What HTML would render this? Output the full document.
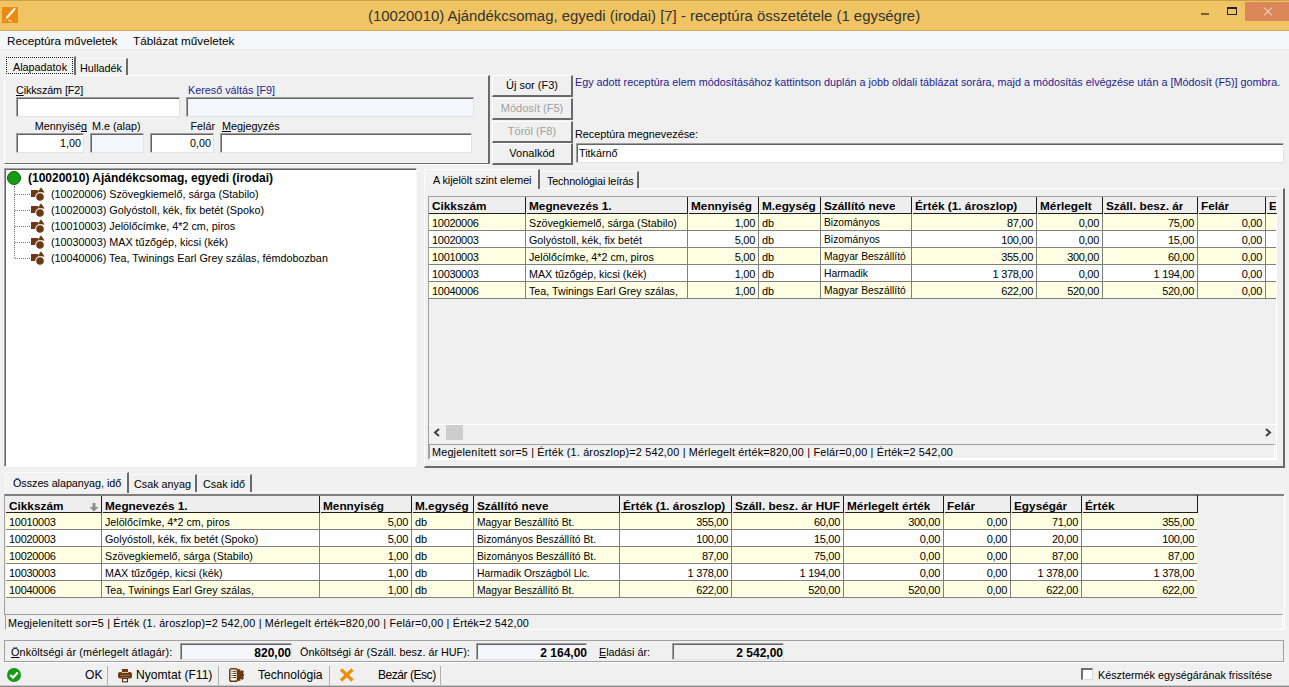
<!DOCTYPE html><html><head><meta charset="utf-8"><style>
*{margin:0;padding:0;box-sizing:border-box}
html,body{width:1289px;height:687px;overflow:hidden;background:#F0F0F0;font-family:"Liberation Sans",sans-serif;font-size:10.8px;color:#000}
.a{position:absolute}
.t{position:absolute;white-space:nowrap;line-height:13px}
.r{text-align:right}
.inp{position:absolute;background:#fff;border-top:1px solid #A0A0A0;border-left:1px solid #A0A0A0;border-bottom:1px solid #E3E3E3;border-right:1px solid #E3E3E3;box-shadow:inset 1px 1px 0 #646464}
.btn{position:absolute;background:#F0F0F0;border-top:1px solid #fff;border-left:1px solid #fff;border-bottom:2px solid #6A6A6A;border-right:2px solid #6A6A6A;text-align:center;line-height:18px;font-size:11px}
.hl{position:absolute;height:1px}
.vl{position:absolute;width:1px}
.u{text-decoration:underline;text-decoration-skip-ink:none}
.b{font-weight:bold}
</style></head><body><div class="a" style="left:0;top:0;width:1289px;height:31px;background:#F0C462"></div><div class="a" style="left:0;top:0;width:1289px;height:1px;background:#C8A04C"></div><div class="a" style="left:0;top:30px;width:1289px;height:1px;background:#D2B060"></div><div class="a" style="left:2px;top:7px;width:16px;height:16px;background:#E98A12"></div><svg class="a" style="left:2px;top:7px" width="16" height="16" viewBox="0 0 16 16"><path d="M12.5 2 L5 10.5" stroke="#FFF6E0" stroke-width="2.2" stroke-linecap="round"/><path d="M4 12.5 L3 13.5 M6 13 L10 14.5" stroke="#FFF6E0" stroke-width="1" /></svg><div class="t" style="left:368px;top:7px;font-size:14.9px;line-height:18px;color:#333">(10020010) Ajándékcsomag, egyedi (irodai) [7] - receptúra összetétele (1 egységre)</div><div class="a" style="left:1201px;top:13px;width:8px;height:2px;background:#7A6330"></div><div class="a" style="left:1227px;top:7px;width:10px;height:8px;border:1px solid #222;border-top-width:2px"></div><div class="a" style="left:1245px;top:2px;width:44px;height:19px;background:#DC875A"></div><svg class="a" style="left:1263px;top:7px" width="10" height="9" viewBox="0 0 10 9"><path d="M1 0.5 L9 8.5 M9 0.5 L1 8.5" stroke="#FDF3EC" stroke-width="1"/></svg><div class="a" style="left:0;top:31px;width:1289px;height:18px;background:#F5F6F7"></div><div class="a" style="left:0;top:49px;width:1289px;height:1px;background:#E6E7E8"></div><div class="t" style="left:7px;top:34px;font-size:11.7px;line-height:14px">Receptúra műveletek</div><div class="t" style="left:133px;top:34px;font-size:11.7px;line-height:14px">Táblázat műveletek</div><div class="a" style="left:5px;top:56px;width:71px;height:20px;background:#F2F2F2;border-top:1px solid #FAFAFA;border-left:1px solid #FAFAFA;border-right:2px solid #6A6A6A"></div><div class="a" style="left:6px;top:57px;width:67px;height:17px;border:1px dotted #222"></div><div class="t" style="left:13px;top:61px">Alapadatok</div><div class="a" style="left:76px;top:58px;width:52px;height:17px;border-top:1px solid #FAFAFA;border-right:2px solid #6A6A6A"></div><div class="t" style="left:80px;top:62px;letter-spacing:0px">Hulladék</div><div class="a" style="left:4px;top:75px;width:486px;height:89px;border-top:1px solid #fff;border-left:1px solid #fff;border-right:2px solid #6A6A6A;border-bottom:1px solid #6A6A6A"></div><div class="a" style="left:4px;top:164px;width:486px;height:1px;background:#fff"></div><div class="t" style="left:16px;top:84px;letter-spacing:-0.1px"><span class="u">C</span>ikkszám [F2]</div><div class="t" style="left:188px;top:84px;color:#1E1E90">Kereső váltás [F9]</div><div class="inp" style="left:16px;top:97px;width:164px;height:20px"></div><div class="inp" style="left:186px;top:97px;width:288px;height:20px;background:#F3F6FA"></div><div class="t r" style="left:20px;top:120px;width:67px">Mennyisé<span class="u">g</span></div><div class="t" style="left:92px;top:120px">M.e (alap)</div><div class="t r" style="left:150px;top:120px;width:65px">Felár</div><div class="t" style="left:222px;top:120px"><span class="u">M</span>egjegyzés</div><div class="inp" style="left:16px;top:133px;width:68px;height:20px"></div><div class="t r" style="left:18px;top:137px;width:63px">1,00</div><div class="inp" style="left:90px;top:133px;width:54px;height:20px;background:#F3F6FA"></div><div class="inp" style="left:150px;top:133px;width:64px;height:20px"></div><div class="t r" style="left:152px;top:137px;width:59px">0,00</div><div class="inp" style="left:220px;top:133px;width:252px;height:20px"></div><div class="btn" style="left:492px;top:75px;width:81px;height:22px">Új sor (F3)</div><div class="btn" style="left:492px;top:98px;width:81px;height:22px;color:#A0A0A0">Módosít (F5)</div><div class="btn" style="left:492px;top:121px;width:81px;height:22px;color:#A0A0A0">Töröl (F8)</div><div class="btn" style="left:492px;top:143px;width:81px;height:22px">Vonalkód</div><div class="t" style="left:575px;top:76px;color:#1E1E90;font-size:10.8px">Egy adott receptúra elem módosításához kattintson duplán a jobb oldali táblázat sorára, majd a módosítás elvégzése után a [Módosít (F5)] gombra.</div><div class="t" style="left:575px;top:128px">Receptúra megnevezése:</div><div class="inp" style="left:576px;top:143px;width:708px;height:20px"></div><div class="t" style="left:579px;top:147px">Titkárnő</div><div class="a" style="left:4px;top:168px;width:413px;height:299px;background:#fff;border-top:1px solid #A0A0A0;border-left:1px solid #A0A0A0;border-right:1px solid #F8F8F8;border-bottom:1px solid #F8F8F8;box-shadow:inset 1px 1px 0 #646464"></div><div class="a" style="left:7px;top:171px;width:14px;height:14px;border-radius:50%;background:#139C13;border:1px solid #0B5E0B"></div><div class="t b" style="left:28px;top:171px;font-size:12px;line-height:14px">(10020010) Ajándékcsomag, egyedi (irodai)</div><div class="a" style="left:14px;top:186px;width:1px;height:72px;border-left:1px dotted #777"></div><div class="a" style="left:15px;top:194px;width:15px;height:1px;border-top:1px dotted #777"></div><div class="a" style="left:31px;top:187px;width:15px;height:15px"><svg width="15" height="15" viewBox="0 0 15 15"><rect x="0" y="3" width="7" height="7" fill="#6B3A10"/><path d="M10 0.3 L13.6 5.5 L6.4 5.5 Z" fill="#6B3A10"/><circle cx="9" cy="10" r="4.3" fill="#6B3A10" stroke="#fff" stroke-width="1.1"/></svg></div><div class="t" style="left:51px;top:188px">(10020006) Szövegkiemelő, sárga (Stabilo)</div><div class="a" style="left:15px;top:210px;width:15px;height:1px;border-top:1px dotted #777"></div><div class="a" style="left:31px;top:203px;width:15px;height:15px"><svg width="15" height="15" viewBox="0 0 15 15"><rect x="0" y="3" width="7" height="7" fill="#6B3A10"/><path d="M10 0.3 L13.6 5.5 L6.4 5.5 Z" fill="#6B3A10"/><circle cx="9" cy="10" r="4.3" fill="#6B3A10" stroke="#fff" stroke-width="1.1"/></svg></div><div class="t" style="left:51px;top:204px">(10020003) Golyóstoll, kék, fix betét (Spoko)</div><div class="a" style="left:15px;top:226px;width:15px;height:1px;border-top:1px dotted #777"></div><div class="a" style="left:31px;top:219px;width:15px;height:15px"><svg width="15" height="15" viewBox="0 0 15 15"><rect x="0" y="3" width="7" height="7" fill="#6B3A10"/><path d="M10 0.3 L13.6 5.5 L6.4 5.5 Z" fill="#6B3A10"/><circle cx="9" cy="10" r="4.3" fill="#6B3A10" stroke="#fff" stroke-width="1.1"/></svg></div><div class="t" style="left:51px;top:220px">(10010003) Jelölőcímke, 4*2 cm, piros</div><div class="a" style="left:15px;top:242px;width:15px;height:1px;border-top:1px dotted #777"></div><div class="a" style="left:31px;top:235px;width:15px;height:15px"><svg width="15" height="15" viewBox="0 0 15 15"><rect x="0" y="3" width="7" height="7" fill="#6B3A10"/><path d="M10 0.3 L13.6 5.5 L6.4 5.5 Z" fill="#6B3A10"/><circle cx="9" cy="10" r="4.3" fill="#6B3A10" stroke="#fff" stroke-width="1.1"/></svg></div><div class="t" style="left:51px;top:236px">(10030003) MAX tűzőgép, kicsi (kék)</div><div class="a" style="left:15px;top:258px;width:15px;height:1px;border-top:1px dotted #777"></div><div class="a" style="left:31px;top:251px;width:15px;height:15px"><svg width="15" height="15" viewBox="0 0 15 15"><rect x="0" y="3" width="7" height="7" fill="#6B3A10"/><path d="M10 0.3 L13.6 5.5 L6.4 5.5 Z" fill="#6B3A10"/><circle cx="9" cy="10" r="4.3" fill="#6B3A10" stroke="#fff" stroke-width="1.1"/></svg></div><div class="t" style="left:51px;top:252px">(10040006) Tea, Twinings Earl Grey szálas, fémdobozban</div><div class="a" style="left:424px;top:188px;width:861px;height:280px;border-top:1px solid #fff;border-left:1px solid #fff;border-right:2px solid #6A6A6A;border-bottom:2px solid #6A6A6A"></div><div class="a" style="left:424px;top:169px;width:116px;height:20px;background:#F2F2F2;border-top:1px solid #FAFAFA;border-left:1px solid #FAFAFA;border-right:2px solid #6A6A6A"></div><div class="t" style="left:433px;top:174px;letter-spacing:-0.05px">A kijelölt szint elemei</div><div class="a" style="left:540px;top:171px;width:99px;height:17px;border-top:1px solid #FAFAFA;border-right:2px solid #6A6A6A"></div><div class="t" style="left:547px;top:175px;letter-spacing:-0.15px">Technológiai leírás</div><div class="a" style="left:428px;top:196px;width:849px;height:264px;border-top:1px solid #A0A0A0;border-left:1px solid #A0A0A0;border-right:1px solid #fff;border-bottom:1px solid #fff"></div><div class="a" style="left:429px;top:197px;width:847px;height:16px;background:#EEEEEE"></div><div class="a" style="left:429px;top:214px;width:847px;height:16px;background:#FFFFE3"></div><div class="a" style="left:429px;top:230px;width:847px;height:1px;background:#808080"></div><div class="t" style="left:432px;top:217px;font-size:11px;letter-spacing:-0.3px;overflow:hidden;max-width:93px">10020006</div><div class="t" style="left:529px;top:217px;font-size:10.7px;overflow:hidden;max-width:158px">Szövegkiemelő, sárga (Stabilo)</div><div class="t" style="left:688px;top:217px;width:67px;text-align:right;font-size:11px;letter-spacing:-0.3px;">1,00</div><div class="t" style="left:762px;top:217px;font-size:10.9px;overflow:hidden;max-width:58px">db</div><div class="t" style="left:824px;top:216px;font-size:10.29px;overflow:hidden;max-width:87px">Bizományos</div><div class="t" style="left:912px;top:217px;width:121px;text-align:right;font-size:11px;letter-spacing:-0.3px;">87,00</div><div class="t" style="left:1037px;top:217px;width:62px;text-align:right;font-size:11px;letter-spacing:-0.3px;">0,00</div><div class="t" style="left:1103px;top:217px;width:91px;text-align:right;font-size:11px;letter-spacing:-0.3px;">75,00</div><div class="t" style="left:1198px;top:217px;width:64px;text-align:right;font-size:11px;letter-spacing:-0.3px;">0,00</div><div class="t" style="left:1266px;top:217px;width:7px;text-align:right;font-size:11px;letter-spacing:-0.3px;"></div><div class="a" style="left:429px;top:231px;width:847px;height:16px;background:#FFFFFF"></div><div class="a" style="left:429px;top:247px;width:847px;height:1px;background:#808080"></div><div class="t" style="left:432px;top:234px;font-size:11px;letter-spacing:-0.3px;overflow:hidden;max-width:93px">10020003</div><div class="t" style="left:529px;top:234px;font-size:10.7px;overflow:hidden;max-width:158px">Golyóstoll, kék, fix betét</div><div class="t" style="left:688px;top:234px;width:67px;text-align:right;font-size:11px;letter-spacing:-0.3px;">5,00</div><div class="t" style="left:762px;top:234px;font-size:10.9px;overflow:hidden;max-width:58px">db</div><div class="t" style="left:824px;top:233px;font-size:10.29px;overflow:hidden;max-width:87px">Bizományos</div><div class="t" style="left:912px;top:234px;width:121px;text-align:right;font-size:11px;letter-spacing:-0.3px;">100,00</div><div class="t" style="left:1037px;top:234px;width:62px;text-align:right;font-size:11px;letter-spacing:-0.3px;">0,00</div><div class="t" style="left:1103px;top:234px;width:91px;text-align:right;font-size:11px;letter-spacing:-0.3px;">15,00</div><div class="t" style="left:1198px;top:234px;width:64px;text-align:right;font-size:11px;letter-spacing:-0.3px;">0,00</div><div class="t" style="left:1266px;top:234px;width:7px;text-align:right;font-size:11px;letter-spacing:-0.3px;"></div><div class="a" style="left:429px;top:248px;width:847px;height:16px;background:#FFFFE3"></div><div class="a" style="left:429px;top:264px;width:847px;height:1px;background:#808080"></div><div class="t" style="left:432px;top:251px;font-size:11px;letter-spacing:-0.3px;overflow:hidden;max-width:93px">10010003</div><div class="t" style="left:529px;top:251px;font-size:10.7px;overflow:hidden;max-width:158px">Jelölőcímke, 4*2 cm, piros</div><div class="t" style="left:688px;top:251px;width:67px;text-align:right;font-size:11px;letter-spacing:-0.3px;">5,00</div><div class="t" style="left:762px;top:251px;font-size:10.9px;overflow:hidden;max-width:58px">db</div><div class="t" style="left:824px;top:250px;font-size:10.29px;overflow:hidden;max-width:87px">Magyar Beszállító</div><div class="t" style="left:912px;top:251px;width:121px;text-align:right;font-size:11px;letter-spacing:-0.3px;">355,00</div><div class="t" style="left:1037px;top:251px;width:62px;text-align:right;font-size:11px;letter-spacing:-0.3px;">300,00</div><div class="t" style="left:1103px;top:251px;width:91px;text-align:right;font-size:11px;letter-spacing:-0.3px;">60,00</div><div class="t" style="left:1198px;top:251px;width:64px;text-align:right;font-size:11px;letter-spacing:-0.3px;">0,00</div><div class="t" style="left:1266px;top:251px;width:7px;text-align:right;font-size:11px;letter-spacing:-0.3px;"></div><div class="a" style="left:429px;top:265px;width:847px;height:16px;background:#FFFFFF"></div><div class="a" style="left:429px;top:281px;width:847px;height:1px;background:#808080"></div><div class="t" style="left:432px;top:268px;font-size:11px;letter-spacing:-0.3px;overflow:hidden;max-width:93px">10030003</div><div class="t" style="left:529px;top:268px;font-size:10.7px;overflow:hidden;max-width:158px">MAX tűzőgép, kicsi (kék)</div><div class="t" style="left:688px;top:268px;width:67px;text-align:right;font-size:11px;letter-spacing:-0.3px;">1,00</div><div class="t" style="left:762px;top:268px;font-size:10.9px;overflow:hidden;max-width:58px">db</div><div class="t" style="left:824px;top:267px;font-size:10.29px;overflow:hidden;max-width:87px">Harmadik</div><div class="t" style="left:912px;top:268px;width:121px;text-align:right;font-size:11px;letter-spacing:-0.3px;">1 378,00</div><div class="t" style="left:1037px;top:268px;width:62px;text-align:right;font-size:11px;letter-spacing:-0.3px;">0,00</div><div class="t" style="left:1103px;top:268px;width:91px;text-align:right;font-size:11px;letter-spacing:-0.3px;">1 194,00</div><div class="t" style="left:1198px;top:268px;width:64px;text-align:right;font-size:11px;letter-spacing:-0.3px;">0,00</div><div class="t" style="left:1266px;top:268px;width:7px;text-align:right;font-size:11px;letter-spacing:-0.3px;"></div><div class="a" style="left:429px;top:282px;width:847px;height:16px;background:#FFFFE3"></div><div class="a" style="left:429px;top:298px;width:847px;height:1px;background:#808080"></div><div class="t" style="left:432px;top:285px;font-size:11px;letter-spacing:-0.3px;overflow:hidden;max-width:93px">10040006</div><div class="t" style="left:529px;top:285px;font-size:10.7px;overflow:hidden;max-width:158px">Tea, Twinings Earl Grey szálas,</div><div class="t" style="left:688px;top:285px;width:67px;text-align:right;font-size:11px;letter-spacing:-0.3px;">1,00</div><div class="t" style="left:762px;top:285px;font-size:10.9px;overflow:hidden;max-width:58px">db</div><div class="t" style="left:824px;top:284px;font-size:10.29px;overflow:hidden;max-width:87px">Magyar Beszállító</div><div class="t" style="left:912px;top:285px;width:121px;text-align:right;font-size:11px;letter-spacing:-0.3px;">622,00</div><div class="t" style="left:1037px;top:285px;width:62px;text-align:right;font-size:11px;letter-spacing:-0.3px;">520,00</div><div class="t" style="left:1103px;top:285px;width:91px;text-align:right;font-size:11px;letter-spacing:-0.3px;">520,00</div><div class="t" style="left:1198px;top:285px;width:64px;text-align:right;font-size:11px;letter-spacing:-0.3px;">0,00</div><div class="t" style="left:1266px;top:285px;width:7px;text-align:right;font-size:11px;letter-spacing:-0.3px;"></div><div class="t b" style="left:432px;top:200px;font-size:11.8px;line-height:13px;overflow:hidden;max-width:93px">Cikkszám</div><div class="a" style="left:429px;top:213px;width:97px;height:1px;background:#1E1E1E"></div><div class="a" style="left:525px;top:197px;width:1px;height:16px;background:#1E1E1E"></div><div class="t b" style="left:529px;top:200px;font-size:11.8px;line-height:13px;overflow:hidden;max-width:158px">Megnevezés 1.</div><div class="a" style="left:527px;top:213px;width:161px;height:1px;background:#1E1E1E"></div><div class="a" style="left:687px;top:197px;width:1px;height:16px;background:#1E1E1E"></div><div class="t b" style="left:691px;top:200px;font-size:11.8px;line-height:13px;overflow:hidden;max-width:67px">Mennyiség</div><div class="a" style="left:689px;top:213px;width:70px;height:1px;background:#1E1E1E"></div><div class="a" style="left:758px;top:197px;width:1px;height:16px;background:#1E1E1E"></div><div class="t b" style="left:762px;top:200px;font-size:11.8px;line-height:13px;overflow:hidden;max-width:58px">M.egység</div><div class="a" style="left:760px;top:213px;width:61px;height:1px;background:#1E1E1E"></div><div class="a" style="left:820px;top:197px;width:1px;height:16px;background:#1E1E1E"></div><div class="t b" style="left:824px;top:200px;font-size:11.8px;line-height:13px;overflow:hidden;max-width:87px">Szállító neve</div><div class="a" style="left:822px;top:213px;width:90px;height:1px;background:#1E1E1E"></div><div class="a" style="left:911px;top:197px;width:1px;height:16px;background:#1E1E1E"></div><div class="t b" style="left:915px;top:200px;font-size:11.8px;line-height:13px;overflow:hidden;max-width:121px">Érték (1. ároszlop)</div><div class="a" style="left:913px;top:213px;width:124px;height:1px;background:#1E1E1E"></div><div class="a" style="left:1036px;top:197px;width:1px;height:16px;background:#1E1E1E"></div><div class="t b" style="left:1040px;top:200px;font-size:11.8px;line-height:13px;overflow:hidden;max-width:62px">Mérlegelt</div><div class="a" style="left:1038px;top:213px;width:65px;height:1px;background:#1E1E1E"></div><div class="a" style="left:1102px;top:197px;width:1px;height:16px;background:#1E1E1E"></div><div class="t b" style="left:1106px;top:200px;font-size:11.8px;line-height:13px;overflow:hidden;max-width:91px">Száll. besz. ár</div><div class="a" style="left:1104px;top:213px;width:94px;height:1px;background:#1E1E1E"></div><div class="a" style="left:1197px;top:197px;width:1px;height:16px;background:#1E1E1E"></div><div class="t b" style="left:1201px;top:200px;font-size:11.8px;line-height:13px;overflow:hidden;max-width:64px">Felár</div><div class="a" style="left:1199px;top:213px;width:67px;height:1px;background:#1E1E1E"></div><div class="a" style="left:1265px;top:197px;width:1px;height:16px;background:#1E1E1E"></div><div class="t b" style="left:1269px;top:200px;font-size:11.8px;line-height:13px;overflow:hidden;max-width:7px">Egységár</div><div class="a" style="left:1267px;top:213px;width:10px;height:1px;background:#1E1E1E"></div><div class="a" style="left:525px;top:214px;width:1px;height:85px;background:#808080"></div><div class="a" style="left:687px;top:214px;width:1px;height:85px;background:#808080"></div><div class="a" style="left:758px;top:214px;width:1px;height:85px;background:#808080"></div><div class="a" style="left:820px;top:214px;width:1px;height:85px;background:#808080"></div><div class="a" style="left:911px;top:214px;width:1px;height:85px;background:#808080"></div><div class="a" style="left:1036px;top:214px;width:1px;height:85px;background:#808080"></div><div class="a" style="left:1102px;top:214px;width:1px;height:85px;background:#808080"></div><div class="a" style="left:1197px;top:214px;width:1px;height:85px;background:#808080"></div><div class="a" style="left:1265px;top:214px;width:1px;height:85px;background:#808080"></div><div class="a" style="left:429px;top:424px;width:847px;height:1px;background:#fff"></div><svg class="a" style="left:433px;top:428px" width="8" height="9" viewBox="0 0 8 9"><path d="M6 1 L2 4.5 L6 8" stroke="#404040" stroke-width="2" fill="none"/></svg><div class="a" style="left:446px;top:425px;width:17px;height:15px;background:#CDCDCD"></div><svg class="a" style="left:1264px;top:428px" width="8" height="9" viewBox="0 0 8 9"><path d="M2 1 L6 4.5 L2 8" stroke="#404040" stroke-width="2" fill="none"/></svg><div class="a" style="left:429px;top:444px;width:846px;height:15px;border-top:1px solid #A0A0A0;border-left:1px solid #A0A0A0;border-bottom:1px solid #fff;border-right:1px solid #fff"></div><div class="t" style="left:432px;top:446px;letter-spacing:0.2px">Megjelenített sor=5 | Érték (1. ároszlop)=2 542,00 | Mérlegelt érték=820,00 | Felár=0,00 | Érték=2 542,00</div><div class="a" style="left:4px;top:491px;width:1281px;height:1px;background:#FAFAFA"></div><div class="a" style="left:4px;top:494px;width:1281px;height:2px;background:#7E7E7E"></div><div class="a" style="left:1284px;top:494px;width:1px;height:135px;background:#fff"></div><div class="a" style="left:5px;top:472px;width:124px;height:21px;background:#F2F2F2;border-top:1px solid #FAFAFA;border-left:1px solid #FAFAFA;border-right:2px solid #6A6A6A"></div><div class="t" style="left:13px;top:477px;letter-spacing:-0.05px">Összes alapanyag, idő</div><div class="a" style="left:129px;top:474px;width:68px;height:18px;border-top:1px solid #FAFAFA;border-right:2px solid #6A6A6A"></div><div class="t" style="left:134px;top:478px;letter-spacing:0px">Csak anyag</div><div class="a" style="left:197px;top:474px;width:55px;height:18px;border-top:1px solid #FAFAFA;border-right:2px solid #6A6A6A"></div><div class="t" style="left:203px;top:478px;letter-spacing:0px">Csak idő</div><div class="a" style="left:6px;top:496px;width:1191px;height:16px;background:#EEEEEE"></div><div class="a" style="left:6px;top:513px;width:1191px;height:16px;background:#FFFFE3"></div><div class="a" style="left:6px;top:529px;width:1191px;height:1px;background:#808080"></div><div class="t" style="left:9px;top:516px;font-size:11px;letter-spacing:-0.3px;overflow:hidden;max-width:92px">10010003</div><div class="t" style="left:105px;top:516px;font-size:10.7px;overflow:hidden;max-width:214px">Jelölőcímke, 4*2 cm, piros</div><div class="t" style="left:320px;top:516px;width:88px;text-align:right;font-size:11px;letter-spacing:-0.3px;">5,00</div><div class="t" style="left:415px;top:516px;font-size:10.9px;overflow:hidden;max-width:58px">db</div><div class="t" style="left:477px;top:516px;font-size:10.3px;overflow:hidden;max-width:142px">Magyar Beszállító Bt.</div><div class="t" style="left:620px;top:516px;width:108px;text-align:right;font-size:11px;letter-spacing:-0.3px;">355,00</div><div class="t" style="left:732px;top:516px;width:108px;text-align:right;font-size:11px;letter-spacing:-0.3px;">60,00</div><div class="t" style="left:844px;top:516px;width:96px;text-align:right;font-size:11px;letter-spacing:-0.3px;">300,00</div><div class="t" style="left:944px;top:516px;width:63px;text-align:right;font-size:11px;letter-spacing:-0.3px;">0,00</div><div class="t" style="left:1011px;top:516px;width:67px;text-align:right;font-size:11px;letter-spacing:-0.3px;">71,00</div><div class="t" style="left:1082px;top:516px;width:112px;text-align:right;font-size:11px;letter-spacing:-0.3px;">355,00</div><div class="a" style="left:6px;top:530px;width:1191px;height:16px;background:#FFFFFF"></div><div class="a" style="left:6px;top:546px;width:1191px;height:1px;background:#808080"></div><div class="t" style="left:9px;top:533px;font-size:11px;letter-spacing:-0.3px;overflow:hidden;max-width:92px">10020003</div><div class="t" style="left:105px;top:533px;font-size:10.7px;overflow:hidden;max-width:214px">Golyóstoll, kék, fix betét (Spoko)</div><div class="t" style="left:320px;top:533px;width:88px;text-align:right;font-size:11px;letter-spacing:-0.3px;">5,00</div><div class="t" style="left:415px;top:533px;font-size:10.9px;overflow:hidden;max-width:58px">db</div><div class="t" style="left:477px;top:533px;font-size:10.3px;overflow:hidden;max-width:142px">Bizományos Beszállító Bt.</div><div class="t" style="left:620px;top:533px;width:108px;text-align:right;font-size:11px;letter-spacing:-0.3px;">100,00</div><div class="t" style="left:732px;top:533px;width:108px;text-align:right;font-size:11px;letter-spacing:-0.3px;">15,00</div><div class="t" style="left:844px;top:533px;width:96px;text-align:right;font-size:11px;letter-spacing:-0.3px;">0,00</div><div class="t" style="left:944px;top:533px;width:63px;text-align:right;font-size:11px;letter-spacing:-0.3px;">0,00</div><div class="t" style="left:1011px;top:533px;width:67px;text-align:right;font-size:11px;letter-spacing:-0.3px;">20,00</div><div class="t" style="left:1082px;top:533px;width:112px;text-align:right;font-size:11px;letter-spacing:-0.3px;">100,00</div><div class="a" style="left:6px;top:547px;width:1191px;height:16px;background:#FFFFE3"></div><div class="a" style="left:6px;top:563px;width:1191px;height:1px;background:#808080"></div><div class="t" style="left:9px;top:550px;font-size:11px;letter-spacing:-0.3px;overflow:hidden;max-width:92px">10020006</div><div class="t" style="left:105px;top:550px;font-size:10.7px;overflow:hidden;max-width:214px">Szövegkiemelő, sárga (Stabilo)</div><div class="t" style="left:320px;top:550px;width:88px;text-align:right;font-size:11px;letter-spacing:-0.3px;">1,00</div><div class="t" style="left:415px;top:550px;font-size:10.9px;overflow:hidden;max-width:58px">db</div><div class="t" style="left:477px;top:550px;font-size:10.3px;overflow:hidden;max-width:142px">Bizományos Beszállító Bt.</div><div class="t" style="left:620px;top:550px;width:108px;text-align:right;font-size:11px;letter-spacing:-0.3px;">87,00</div><div class="t" style="left:732px;top:550px;width:108px;text-align:right;font-size:11px;letter-spacing:-0.3px;">75,00</div><div class="t" style="left:844px;top:550px;width:96px;text-align:right;font-size:11px;letter-spacing:-0.3px;">0,00</div><div class="t" style="left:944px;top:550px;width:63px;text-align:right;font-size:11px;letter-spacing:-0.3px;">0,00</div><div class="t" style="left:1011px;top:550px;width:67px;text-align:right;font-size:11px;letter-spacing:-0.3px;">87,00</div><div class="t" style="left:1082px;top:550px;width:112px;text-align:right;font-size:11px;letter-spacing:-0.3px;">87,00</div><div class="a" style="left:6px;top:564px;width:1191px;height:16px;background:#FFFFFF"></div><div class="a" style="left:6px;top:580px;width:1191px;height:1px;background:#808080"></div><div class="t" style="left:9px;top:567px;font-size:11px;letter-spacing:-0.3px;overflow:hidden;max-width:92px">10030003</div><div class="t" style="left:105px;top:567px;font-size:10.7px;overflow:hidden;max-width:214px">MAX tűzőgép, kicsi (kék)</div><div class="t" style="left:320px;top:567px;width:88px;text-align:right;font-size:11px;letter-spacing:-0.3px;">1,00</div><div class="t" style="left:415px;top:567px;font-size:10.9px;overflow:hidden;max-width:58px">db</div><div class="t" style="left:477px;top:567px;font-size:10.3px;overflow:hidden;max-width:142px">Harmadik Országból Llc.</div><div class="t" style="left:620px;top:567px;width:108px;text-align:right;font-size:11px;letter-spacing:-0.3px;">1 378,00</div><div class="t" style="left:732px;top:567px;width:108px;text-align:right;font-size:11px;letter-spacing:-0.3px;">1 194,00</div><div class="t" style="left:844px;top:567px;width:96px;text-align:right;font-size:11px;letter-spacing:-0.3px;">0,00</div><div class="t" style="left:944px;top:567px;width:63px;text-align:right;font-size:11px;letter-spacing:-0.3px;">0,00</div><div class="t" style="left:1011px;top:567px;width:67px;text-align:right;font-size:11px;letter-spacing:-0.3px;">1 378,00</div><div class="t" style="left:1082px;top:567px;width:112px;text-align:right;font-size:11px;letter-spacing:-0.3px;">1 378,00</div><div class="a" style="left:6px;top:581px;width:1191px;height:16px;background:#FFFFE3"></div><div class="a" style="left:6px;top:597px;width:1191px;height:1px;background:#808080"></div><div class="t" style="left:9px;top:584px;font-size:11px;letter-spacing:-0.3px;overflow:hidden;max-width:92px">10040006</div><div class="t" style="left:105px;top:584px;font-size:10.7px;overflow:hidden;max-width:214px">Tea, Twinings Earl Grey szálas,</div><div class="t" style="left:320px;top:584px;width:88px;text-align:right;font-size:11px;letter-spacing:-0.3px;">1,00</div><div class="t" style="left:415px;top:584px;font-size:10.9px;overflow:hidden;max-width:58px">db</div><div class="t" style="left:477px;top:584px;font-size:10.3px;overflow:hidden;max-width:142px">Magyar Beszállító Bt.</div><div class="t" style="left:620px;top:584px;width:108px;text-align:right;font-size:11px;letter-spacing:-0.3px;">622,00</div><div class="t" style="left:732px;top:584px;width:108px;text-align:right;font-size:11px;letter-spacing:-0.3px;">520,00</div><div class="t" style="left:844px;top:584px;width:96px;text-align:right;font-size:11px;letter-spacing:-0.3px;">520,00</div><div class="t" style="left:944px;top:584px;width:63px;text-align:right;font-size:11px;letter-spacing:-0.3px;">0,00</div><div class="t" style="left:1011px;top:584px;width:67px;text-align:right;font-size:11px;letter-spacing:-0.3px;">622,00</div><div class="t" style="left:1082px;top:584px;width:112px;text-align:right;font-size:11px;letter-spacing:-0.3px;">622,00</div><div class="t b" style="left:9px;top:500px;font-size:11.8px;line-height:13px;overflow:hidden;max-width:92px">Cikkszám</div><div class="a" style="left:6px;top:512px;width:96px;height:1px;background:#1E1E1E"></div><div class="a" style="left:101px;top:496px;width:1px;height:16px;background:#1E1E1E"></div><div class="t b" style="left:105px;top:500px;font-size:11.8px;line-height:13px;overflow:hidden;max-width:214px">Megnevezés 1.</div><div class="a" style="left:103px;top:512px;width:217px;height:1px;background:#1E1E1E"></div><div class="a" style="left:319px;top:496px;width:1px;height:16px;background:#1E1E1E"></div><div class="t b" style="left:323px;top:500px;font-size:11.8px;line-height:13px;overflow:hidden;max-width:88px">Mennyiség</div><div class="a" style="left:321px;top:512px;width:91px;height:1px;background:#1E1E1E"></div><div class="a" style="left:411px;top:496px;width:1px;height:16px;background:#1E1E1E"></div><div class="t b" style="left:415px;top:500px;font-size:11.8px;line-height:13px;overflow:hidden;max-width:58px">M.egység</div><div class="a" style="left:413px;top:512px;width:61px;height:1px;background:#1E1E1E"></div><div class="a" style="left:473px;top:496px;width:1px;height:16px;background:#1E1E1E"></div><div class="t b" style="left:477px;top:500px;font-size:11.8px;line-height:13px;overflow:hidden;max-width:142px">Szállító neve</div><div class="a" style="left:475px;top:512px;width:145px;height:1px;background:#1E1E1E"></div><div class="a" style="left:619px;top:496px;width:1px;height:16px;background:#1E1E1E"></div><div class="t b" style="left:623px;top:500px;font-size:11.8px;line-height:13px;overflow:hidden;max-width:108px">Érték (1. ároszlop)</div><div class="a" style="left:621px;top:512px;width:111px;height:1px;background:#1E1E1E"></div><div class="a" style="left:731px;top:496px;width:1px;height:16px;background:#1E1E1E"></div><div class="t b" style="left:735px;top:500px;font-size:11.8px;line-height:13px;overflow:hidden;max-width:108px">Száll. besz. ár HUF</div><div class="a" style="left:733px;top:512px;width:111px;height:1px;background:#1E1E1E"></div><div class="a" style="left:843px;top:496px;width:1px;height:16px;background:#1E1E1E"></div><div class="t b" style="left:847px;top:500px;font-size:11.8px;line-height:13px;overflow:hidden;max-width:96px">Mérlegelt érték</div><div class="a" style="left:845px;top:512px;width:99px;height:1px;background:#1E1E1E"></div><div class="a" style="left:943px;top:496px;width:1px;height:16px;background:#1E1E1E"></div><div class="t b" style="left:947px;top:500px;font-size:11.8px;line-height:13px;overflow:hidden;max-width:63px">Felár</div><div class="a" style="left:945px;top:512px;width:66px;height:1px;background:#1E1E1E"></div><div class="a" style="left:1010px;top:496px;width:1px;height:16px;background:#1E1E1E"></div><div class="t b" style="left:1014px;top:500px;font-size:11.8px;line-height:13px;overflow:hidden;max-width:67px">Egységár</div><div class="a" style="left:1012px;top:512px;width:70px;height:1px;background:#1E1E1E"></div><div class="a" style="left:1081px;top:496px;width:1px;height:16px;background:#1E1E1E"></div><div class="t b" style="left:1085px;top:500px;font-size:11.8px;line-height:13px;overflow:hidden;max-width:112px">Érték</div><div class="a" style="left:1083px;top:512px;width:115px;height:1px;background:#1E1E1E"></div><div class="a" style="left:1197px;top:496px;width:1px;height:16px;background:#1E1E1E"></div><div class="a" style="left:101px;top:513px;width:1px;height:85px;background:#808080"></div><div class="a" style="left:319px;top:513px;width:1px;height:85px;background:#808080"></div><div class="a" style="left:411px;top:513px;width:1px;height:85px;background:#808080"></div><div class="a" style="left:473px;top:513px;width:1px;height:85px;background:#808080"></div><div class="a" style="left:619px;top:513px;width:1px;height:85px;background:#808080"></div><div class="a" style="left:731px;top:513px;width:1px;height:85px;background:#808080"></div><div class="a" style="left:843px;top:513px;width:1px;height:85px;background:#808080"></div><div class="a" style="left:943px;top:513px;width:1px;height:85px;background:#808080"></div><div class="a" style="left:1010px;top:513px;width:1px;height:85px;background:#808080"></div><div class="a" style="left:1081px;top:513px;width:1px;height:85px;background:#808080"></div><div class="a" style="left:1197px;top:495px;width:1px;height:17px;background:#1E1E1E"></div><svg class="a" style="left:89px;top:502px" width="10" height="10" viewBox="0 0 10 10"><path d="M3.5 1 H6.5 V5 H9.5 L5 9.5 L0.5 5 H3.5 Z" fill="#8C8C8C"/></svg><div class="a" style="left:4px;top:495px;width:1px;height:120px;background:#A0A0A0"></div><div class="a" style="left:5px;top:614px;width:1278px;height:16px;border-top:1px solid #A0A0A0;border-left:1px solid #A0A0A0;border-bottom:1px solid #fff;border-right:1px solid #fff"></div><div class="t" style="left:8px;top:617px;letter-spacing:0.2px">Megjelenített sor=5 | Érték (1. ároszlop)=2 542,00 | Mérlegelt érték=820,00 | Felár=0,00 | Érték=2 542,00</div><div class="a" style="left:4px;top:640px;width:1280px;height:22px;border:1px solid #A0A0A0"></div><div class="a" style="left:4px;top:662px;width:1281px;height:1px;background:#fff"></div><div class="t" style="left:11px;top:646px;letter-spacing:0.12px"><span class="u">Ö</span>nköltségi ár (mérlegelt átlagár):</div><div class="inp" style="left:180px;top:643px;width:112px;height:17px;background:#F3F6FA"></div><div class="t b r" style="left:182px;top:647px;width:109px;font-size:12px">820,00</div><div class="t" style="left:300px;top:646px">Önköltségi ár (Száll. besz. ár HUF):</div><div class="inp" style="left:476px;top:643px;width:111px;height:17px;background:#F3F6FA"></div><div class="t b r" style="left:478px;top:647px;width:109px;font-size:12px">2 164,00</div><div class="t" style="left:599px;top:646px"><span class="u">E</span>ladási ár:</div><div class="inp" style="left:672px;top:643px;width:112px;height:17px;background:#F0F0F0"></div><div class="t b r" style="left:674px;top:647px;width:109px;font-size:12px">2 542,00</div><div class="a" style="left:0;top:664px;width:1289px;height:22px;background:#F0F0F0"></div><div class="a" style="left:0;top:685px;width:1289px;height:1px;background:#C8C8C8"></div><div class="a" style="left:0;top:686px;width:1289px;height:1px;background:#8A8A8A"></div><svg class="a" style="left:7px;top:668px" width="14" height="14" viewBox="0 0 14 14"><circle cx="7" cy="7" r="7" fill="#159A15"/><path d="M3.3 7 L6 9.6 L10.8 4.6" stroke="#fff" stroke-width="2.2" fill="none"/></svg><div class="t" style="left:85px;top:668px;font-size:12.1px;line-height:14px">OK</div><div class="a" style="left:107px;top:666px;width:1px;height:19px;background:#B0B0B0"></div><svg class="a" style="left:118px;top:668px" width="15" height="15" viewBox="0 0 15 15"><rect x="0" y="4" width="14" height="6.6" rx="2" fill="#6B3A0E"/><rect x="4" y="1" width="6" height="3.2" fill="#6B3A0E"/><path d="M3.5 4.5 H10.5" stroke="#FFF6EA" stroke-width="0.7"/><rect x="2" y="6.9" width="10" height="0.9" fill="#A0703F"/><path d="M3.5 10.2 H10.5" stroke="#FFF6EA" stroke-width="0.8"/><rect x="4.5" y="10.6" width="5" height="3.2" fill="#fff" stroke="#4A2A0A" stroke-width="1.1"/></svg><div class="t" style="left:136px;top:668px;font-size:12.1px;line-height:14px">Nyomtat (F11)</div><div class="a" style="left:218px;top:666px;width:1px;height:19px;background:#B0B0B0"></div><svg class="a" style="left:229px;top:668px" width="15" height="15" viewBox="0 0 15 15"><circle cx="10" cy="7" r="4.3" fill="#6B3A0E"/><rect x="8.6" y="1.2" width="2.8" height="2.6" fill="#6B3A0E" transform="rotate(0 10 7)"/><rect x="8.6" y="1.2" width="2.8" height="2.6" fill="#6B3A0E" transform="rotate(45 10 7)"/><rect x="8.6" y="1.2" width="2.8" height="2.6" fill="#6B3A0E" transform="rotate(90 10 7)"/><rect x="8.6" y="1.2" width="2.8" height="2.6" fill="#6B3A0E" transform="rotate(135 10 7)"/><rect x="8.6" y="1.2" width="2.8" height="2.6" fill="#6B3A0E" transform="rotate(180 10 7)"/><rect x="0.8" y="0.8" width="7.6" height="12.4" rx="1.8" fill="#FFFCF2" stroke="#6B3A0E" stroke-width="1.5"/><path d="M2.6 3.3 h1 M4.3 3.3 h2.6 M2.6 5.4 h1 M4.3 5.4 h2.6 M2.6 7.5 h1 M4.3 7.5 h2.6 M2.6 9.6 h1 M4.3 9.6 h2.6" stroke="#2A1A08" stroke-width="1"/></svg><div class="t" style="left:258px;top:668px;font-size:12.1px;line-height:14px">Technológia</div><div class="a" style="left:329px;top:666px;width:1px;height:19px;background:#B0B0B0"></div><svg class="a" style="left:339px;top:668px" width="16" height="14" viewBox="0 0 16 14"><path d="M2 1.5 L13.5 12.5 M13.5 1.5 L2 12.5" stroke="#EE8C0C" stroke-width="3.2"/></svg><div class="t" style="left:378px;top:668px;font-size:12.1px;line-height:14px;letter-spacing:-0.5px">Bezár (Esc)</div><div class="a" style="left:440px;top:666px;width:1px;height:19px;background:#B0B0B0"></div><div class="a" style="left:1081px;top:668px;width:12px;height:12px;background:#fff;border-top:2px solid #6E6E6E;border-left:2px solid #6E6E6E;border-right:1px solid #DADADA;border-bottom:1px solid #DADADA"></div><div class="t" style="left:1098px;top:668px;font-size:10.8px;line-height:14px">Késztermék egységárának frissítése</div></body></html>
